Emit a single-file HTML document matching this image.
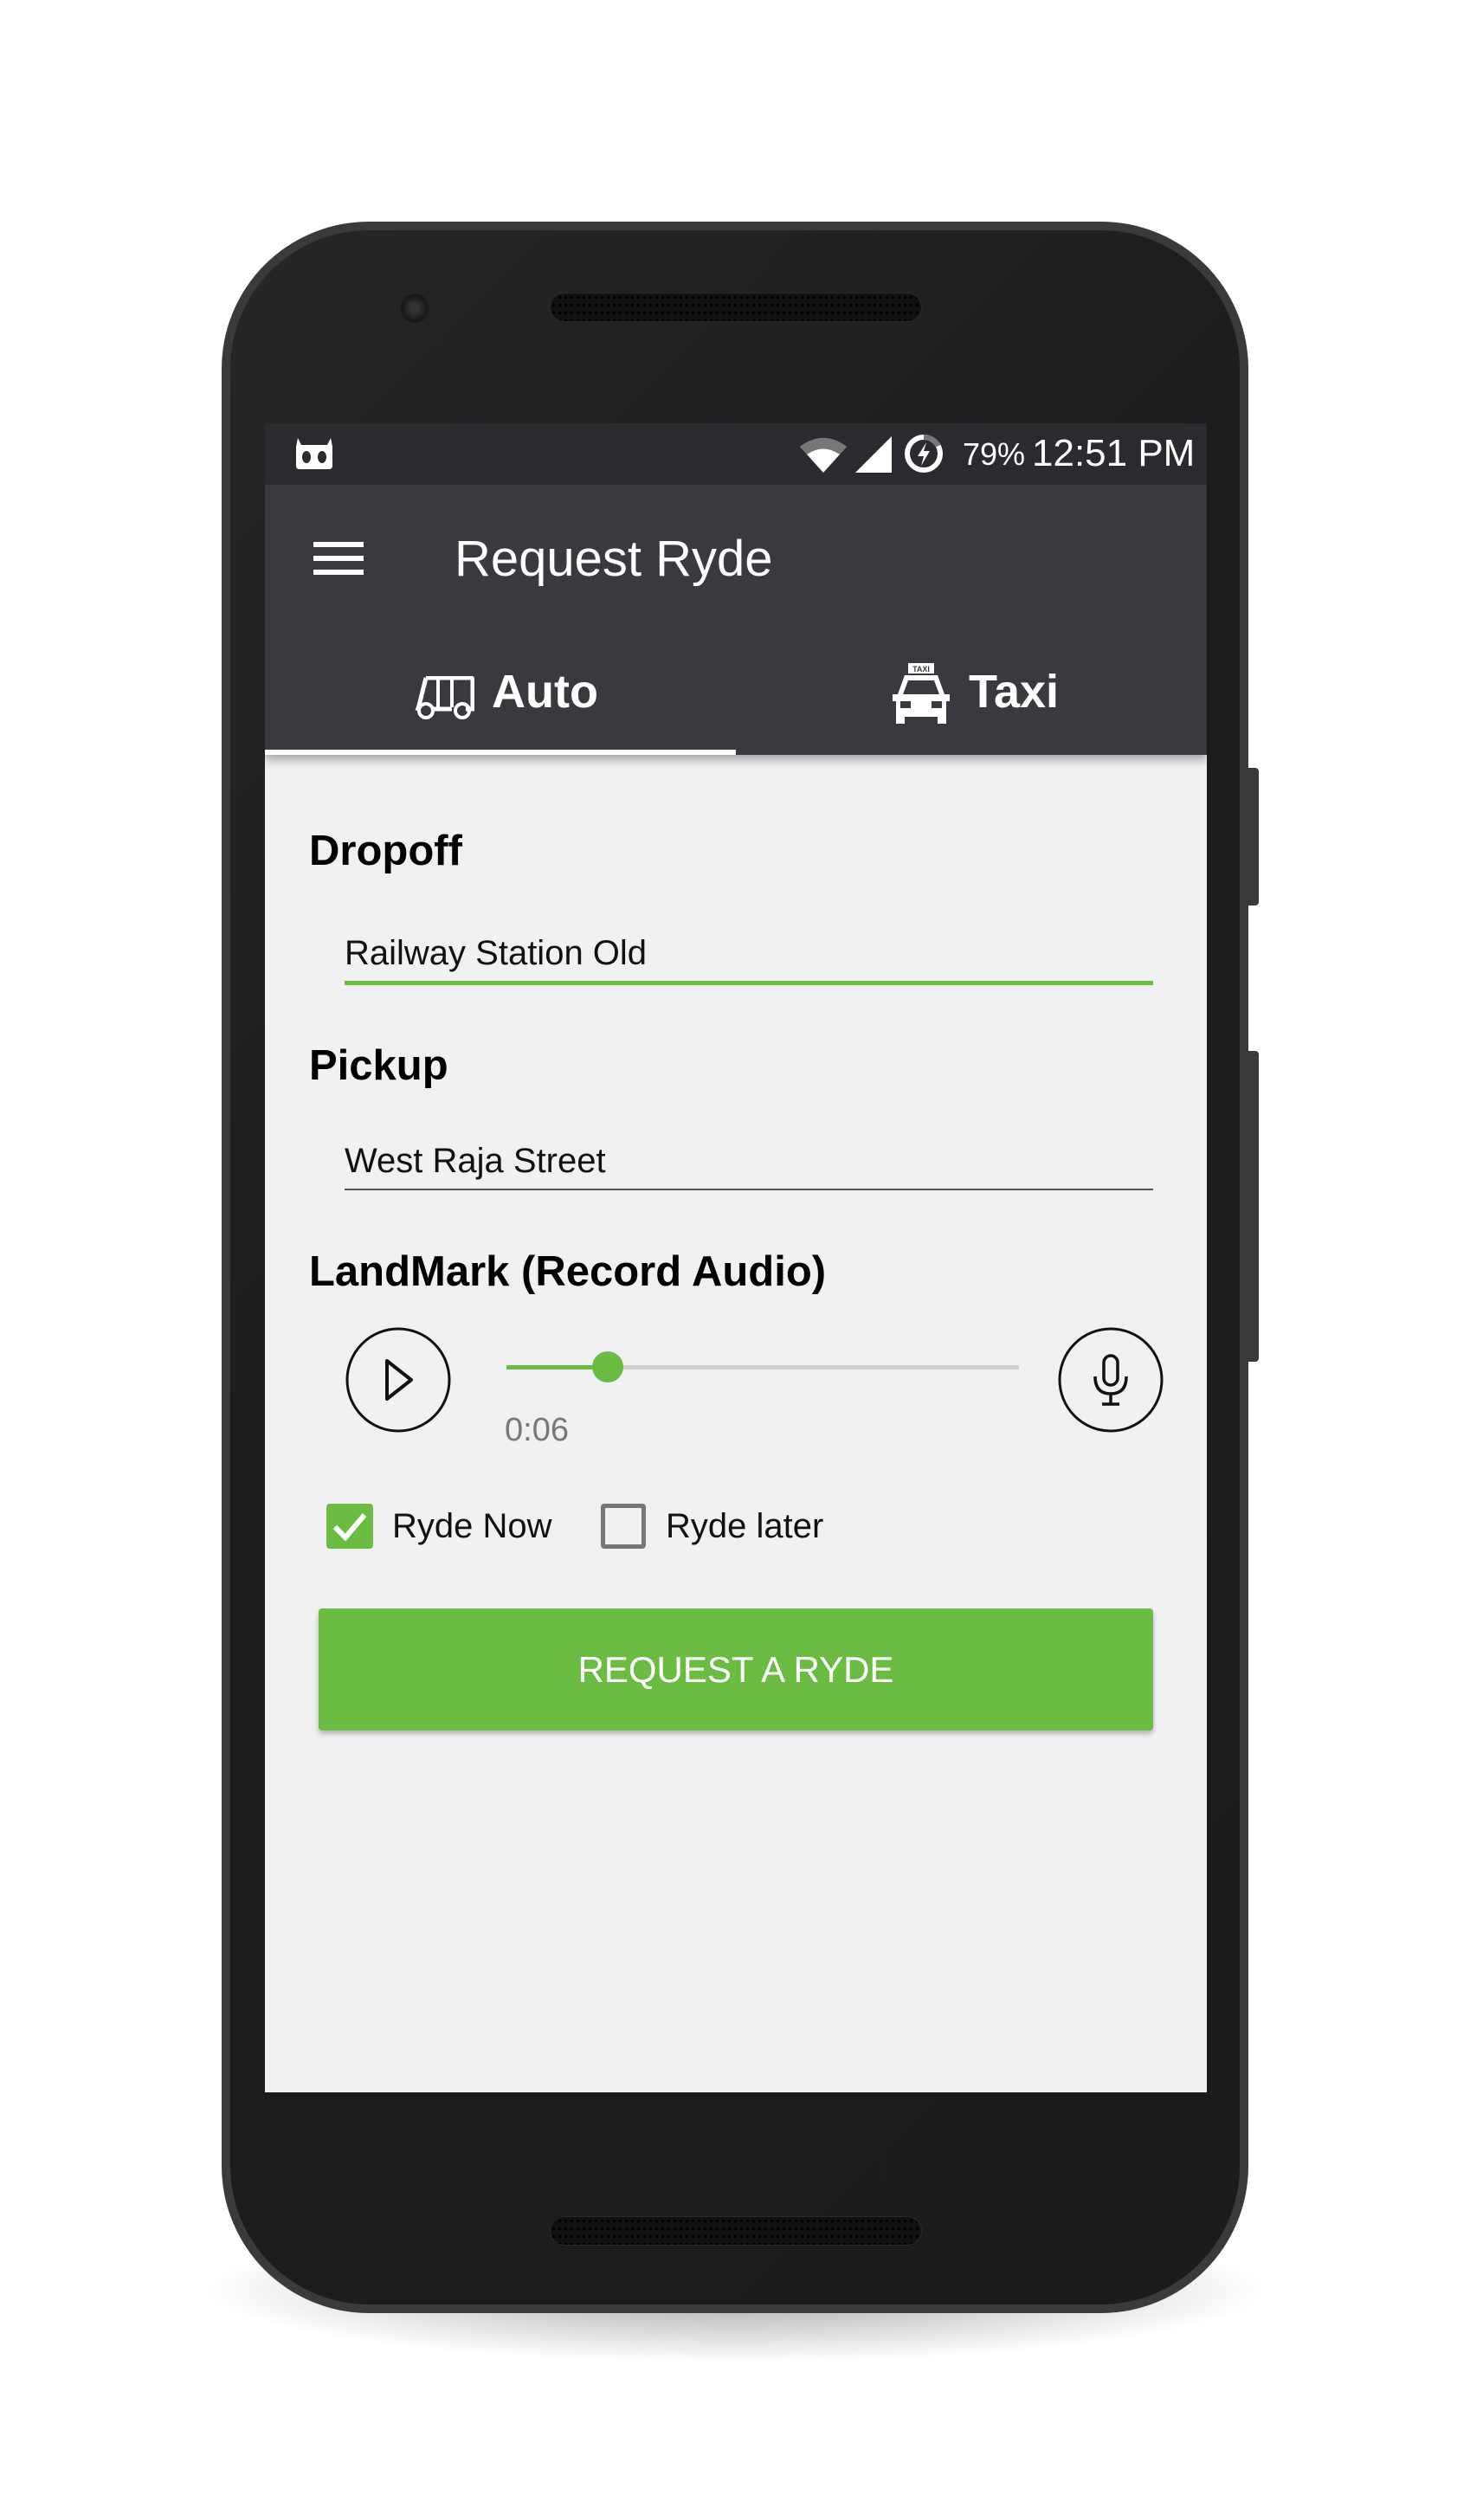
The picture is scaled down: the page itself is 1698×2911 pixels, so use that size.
<!DOCTYPE html>
<html><head><meta charset="utf-8"><style>
*{margin:0;padding:0;box-sizing:border-box}
body{width:1698px;height:2911px;background:#fff;position:relative;overflow:hidden;font-family:"Liberation Sans",sans-serif}
.a{position:absolute}
.shadow{left:230px;top:2560px;width:1240px;height:170px;border-radius:50%;background:radial-gradient(ellipse at center,rgba(0,0,0,.35),rgba(0,0,0,0) 70%)}
.phone{left:256px;top:256px;width:1186px;height:2416px;border-radius:170px;background:#3a3a3a}
.inner{left:266px;top:266px;width:1166px;height:2396px;border-radius:160px;background:linear-gradient(135deg,#262627,#1c1c1d 40%,#1b1b1c)}
.spk{height:34px;width:430px;left:635px;border-radius:17px;background:#111;background-image:radial-gradient(circle,#000 1.6px,transparent 2px);background-size:7px 9px;border:1px solid #2a2a2a}
.cam{left:462px;top:339px;width:34px;height:34px;border-radius:50%;background:radial-gradient(circle,#333 20%,#181818 60%,#2a2a2a)}
.btn{background:#3a3a3a;width:12px;left:1442px;border-radius:0 4px 4px 0}
.screen{left:306px;top:489px;width:1088px;height:1928px;background:#f1f1f3;overflow:hidden}
.status{left:0;top:0;width:1088px;height:71px;background:#2a2b2f}
.tool{left:0;top:71px;width:1088px;height:312px;background:#393a40;box-shadow:0 6px 10px rgba(0,0,0,.3)}
.w{color:#fff}
.lbl{font-weight:bold;font-size:49px;color:#000;left:51px}
.inp{left:92px;width:934px;font-size:40px;color:#111}
</style></head><body>
<div class="a shadow"></div>
<div class="a phone"></div>
<div class="a inner"></div>
<div class="a btn" style="top:887px;height:159px"></div>
<div class="a btn" style="top:1214px;height:359px"></div>
<div class="a cam"></div>
<div class="a spk" style="top:338px"></div>
<div class="a spk" style="top:2560px"></div>
<div class="a screen">
  <div class="a status">
    <svg class="a" style="left:34px;top:17px" width="46" height="36" viewBox="0 0 46 36"><path d="M4 0 L8 8 L38 8 L42 0 L44 10 L44 32 Q44 36 40 36 L6 36 Q2 36 2 32 L2 10Z" fill="#fff"/><ellipse cx="14" cy="22" rx="5" ry="7" fill="#2a2b2f"/><ellipse cx="32" cy="22" rx="5" ry="7" fill="#2a2b2f"/></svg>
    <svg class="a" style="left:618px;top:15px" width="54" height="42" viewBox="0 0 54 42"><path d="M0 12 Q27 -8 54 12 L27 42Z" fill="#fff"/><path d="M0 12 Q27 -8 54 12 L46 21 Q27 8 8 21Z" fill="#777"/></svg>
    <svg class="a" style="left:682px;top:15px" width="42" height="42"><path d="M42 0 L42 42 L0 42Z" fill="#fff"/></svg>
    <svg class="a" style="left:738px;top:12px" width="46" height="46" viewBox="0 0 46 46"><circle cx="23" cy="23" r="19" fill="none" stroke="#fff" stroke-width="6"/><path d="M23 4 A19 19 0 0 1 40 14" fill="none" stroke="#777" stroke-width="6"/><path d="M26 10 L16 26 L23 26 L20 37 L30 20 L23 20Z" fill="#fff"/></svg>
    <div class="a w" style="left:806px;top:15px;font-size:36px">79%</div>
    <div class="a w" style="left:886px;top:10px;font-size:44px">12:51 PM</div>
  </div>
  <div class="a tool">
    <div class="a" style="left:56px;top:66px;width:58px;height:6px;background:#fff"></div>
    <div class="a" style="left:56px;top:82px;width:58px;height:6px;background:#fff"></div>
    <div class="a" style="left:56px;top:98px;width:58px;height:6px;background:#fff"></div>
    <div class="a w" style="left:219px;top:52px;font-size:58px">Request Ryde</div>
    <svg class="a" style="left:172px;top:221px" width="70" height="50" viewBox="0 0 70 50"><path d="M14 2 L66 2 Q68 2 68 6 L68 38 L60 38 M14 2 L6 34 L4 40 M44 38 L22 38" fill="none" stroke="#fff" stroke-width="5"/><path d="M28 4 L28 36 M44 4 L44 36" stroke="#fff" stroke-width="4"/><circle cx="14" cy="40" r="8" fill="none" stroke="#fff" stroke-width="4"/><circle cx="56" cy="40" r="8" fill="none" stroke="#fff" stroke-width="4"/></svg>
    <div class="a w" style="left:262px;top:208px;font-size:54px;font-weight:bold">Auto</div>
    <svg class="a" style="left:721px;top:206px" width="74" height="70" viewBox="0 0 74 70"><rect x="22" y="0" width="30" height="12" fill="#fff"/><text x="37" y="10" font-size="9" font-family="Liberation Sans" text-anchor="middle" fill="#393a40" font-weight="bold">TAXI</text><path d="M18 14 L56 14 L64 36 L70 36 L70 44 L66 44 L66 70 L56 70 L56 62 L18 62 L18 70 L8 70 L8 44 L4 44 L4 36 L10 36Z" fill="#fff"/><path d="M22 20 L52 20 L58 36 L16 36Z" fill="#393a40"/><rect x="13" y="44" width="12" height="8" fill="#393a40"/><rect x="49" y="44" width="12" height="8" fill="#393a40"/></svg>
    <div class="a w" style="left:813px;top:208px;font-size:54px;font-weight:bold">Taxi</div>
    <div class="a" style="left:0;top:306px;width:544px;height:6px;background:#fff"></div>
  </div>
  <div class="a lbl" style="top:466px">Dropoff</div>
  <div class="a inp" style="top:590px">Railway Station Old</div>
  <div class="a" style="left:92px;top:644px;width:934px;height:5px;background:#6abd42"></div>
  <div class="a lbl" style="top:714px">Pickup</div>
  <div class="a inp" style="top:830px">West Raja Street</div>
  <div class="a" style="left:92px;top:884px;width:934px;height:2px;background:#555"></div>
  <div class="a lbl" style="top:952px">LandMark (Record Audio)</div>
  <svg class="a" style="left:92px;top:1043px" width="124" height="124"><circle cx="62" cy="62" r="59" fill="none" stroke="#111" stroke-width="3"/><path d="M49 40 L77 62 L49 84Z" fill="none" stroke="#111" stroke-width="4" stroke-linejoin="round"/></svg>
  <div class="a" style="left:279px;top:1088px;width:592px;height:5px;background:#cfcfcf"></div>
  <div class="a" style="left:279px;top:1088px;width:117px;height:5px;background:#6abd42"></div>
  <div class="a" style="left:378px;top:1072px;width:36px;height:36px;border-radius:50%;background:#6abd42"></div>
  <div class="a" style="left:277px;top:1142px;font-size:38px;color:#777">0:06</div>
  <svg class="a" style="left:915px;top:1043px" width="124" height="124"><circle cx="62" cy="62" r="59" fill="none" stroke="#111" stroke-width="3"/><rect x="54" y="34" width="16" height="34" rx="8" fill="none" stroke="#111" stroke-width="3.5"/><path d="M44 58 Q44 78 62 78 Q80 78 80 58 M62 78 L62 90 M52 90 L72 90" fill="none" stroke="#111" stroke-width="3.5"/></svg>
  <div class="a" style="left:71px;top:1248px;width:54px;height:52px;border-radius:4px;background:#6abd42"></div>
  <svg class="a" style="left:71px;top:1248px" width="54" height="52"><path d="M10 27 L22 39 L44 13" fill="none" stroke="#fff" stroke-width="6"/></svg>
  <div class="a" style="left:147px;top:1252px;font-size:40px;color:#111">Ryde Now</div>
  <div class="a" style="left:388px;top:1248px;width:52px;height:52px;border-radius:4px;border:5px solid #777"></div>
  <div class="a" style="left:463px;top:1252px;font-size:40px;color:#111">Ryde later</div>
  <div class="a" style="left:62px;top:1369px;width:964px;height:141px;background:#6abd42;border-radius:4px;box-shadow:0 4px 6px rgba(0,0,0,.25);color:#fff;font-size:42px;text-align:center;line-height:141px">REQUEST A RYDE</div>
</div>
</body></html>
